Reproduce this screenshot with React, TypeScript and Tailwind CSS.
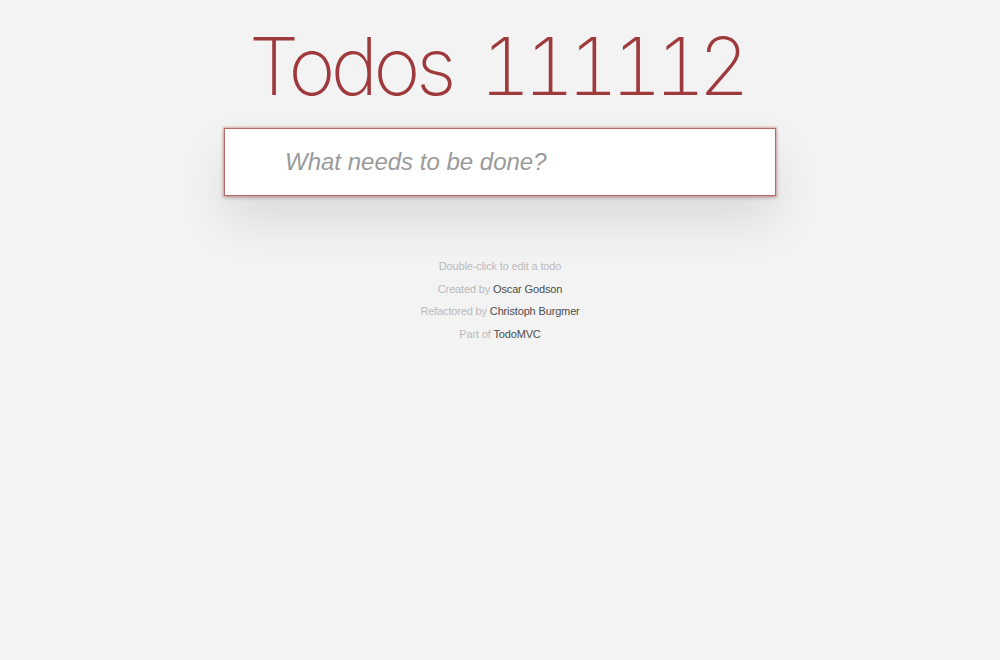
import React, { useState } from "react";

export default function App() {
  const [text, setText] = useState("");

  return (
    <div
      className="min-h-[660px] bg-[#f3f3f3] pt-[16px]"
      style={{ fontFamily: "Inter, 'Helvetica Neue', Helvetica, Arial, sans-serif" }}
    >
      <h1 className="pr-[9px] text-center text-[80px] font-extralight leading-[100px] tracking-[-4.5px] tabular-nums text-[#9e3a3c]">
        <span>Todos</span> <span className="ml-[11px] tracking-[-8px]">111112</span>
      </h1>

      <section className="mx-auto mt-[12px] w-[552px] bg-white shadow-[0_2px_4px_rgba(0,0,0,0.2),0_25px_50px_0_rgba(0,0,0,0.1)]">
        <input
          className="block h-[68px] w-full border border-[#b56a6a] bg-white pl-[60px] pr-4 text-[24px] text-[#4d4d4d] shadow-[0_0_2px_1px_rgba(207,125,125,0.6)] outline-none placeholder:italic placeholder:text-[#9a9a9a]"
          style={{ fontFamily: "'Liberation Sans', Arial, sans-serif" }}
          placeholder="What needs to be done?"
          value={text}
          onChange={(e) => setText(e.target.value)}
        />
      </section>

      <footer
        className="mt-[62px] flex flex-col items-center gap-[6.5px] text-[11px] font-light leading-[16px] tracking-[-0.15px] text-[#bababa]"
        style={{ fontFamily: "'Liberation Sans', Arial, sans-serif" }}
      >
        <p>Double-click to edit a todo</p>
        <p>
          Created by <a className="text-[#4d4d4d]">Oscar Godson</a>
        </p>
        <p>
          Refactored by <a className="text-[#4d4d4d]">Christoph Burgmer</a>
        </p>
        <p>
          Part of <a className="text-[#4d4d4d]">TodoMVC</a>
        </p>
      </footer>
    </div>
  );
}
